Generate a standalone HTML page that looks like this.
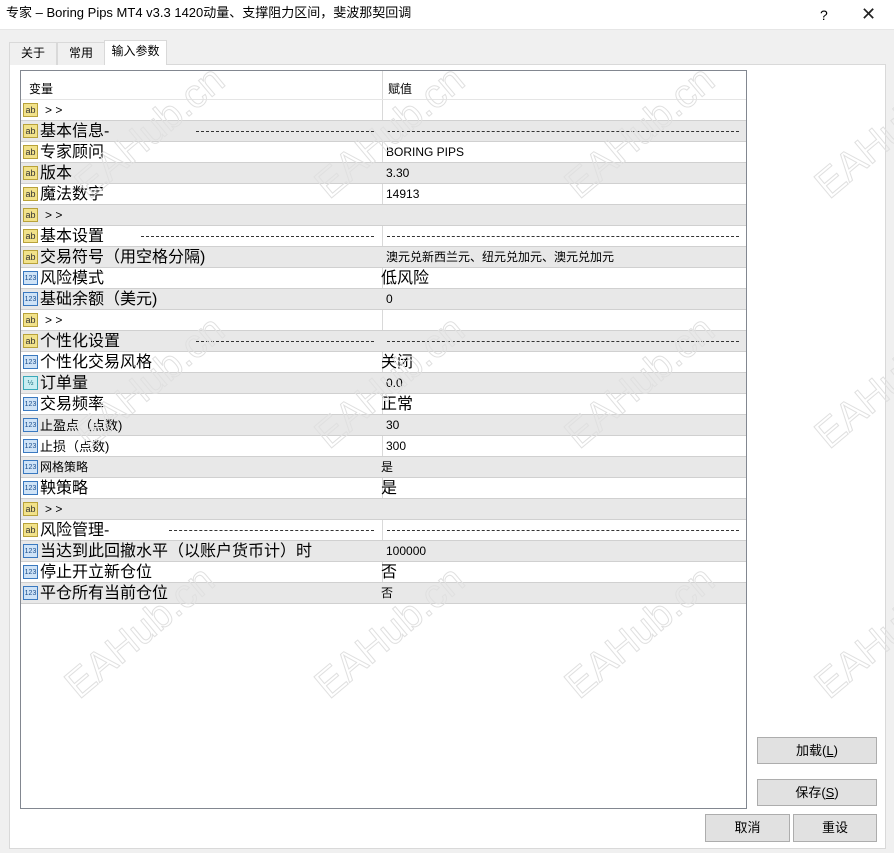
<!DOCTYPE html>
<html><head><meta charset="utf-8"><style>
*{box-sizing:border-box;margin:0;padding:0}
body{width:894px;height:853px;overflow:hidden;background:#f0f0f0;font-family:"Liberation Sans","Microsoft YaHei","Noto Sans CJK SC",sans-serif;color:#000;position:relative}
.title{position:absolute;left:0;top:0;width:894px;height:30px;background:#fff;font-size:13px;line-height:26px;padding-left:6px;border-bottom:1px solid #e6e6e6}
.title .q{position:absolute;left:820px;top:2px;font-size:14px}
.title .x{position:absolute;left:861px;top:1px;font-size:18px;font-weight:100;color:#222}
.tab{position:absolute;top:42px;height:23px;font-size:12px;line-height:20px;text-align:center;border:1px solid #d9d9d9;border-bottom:none;background:#f0f0f0}
.tab.act{background:#fff;top:40px;height:25px}
.page{position:absolute;left:9px;top:64px;width:877px;height:785px;background:#fff;border:1px solid #d9d9d9}
.list{position:absolute;left:20px;top:70px;width:727px;height:739px;border:1px solid #828790;background:#fff;overflow:hidden}
.hdr{height:29px;font-size:12px;position:relative;border-bottom:1px solid #e5e5e5}
.hdr span{position:absolute;top:9px}
.vl{position:absolute;left:361px;top:0;width:1px;height:533px;background:#d9d9d9}
.row{height:21px;position:relative;border-bottom:1px solid #d0d0d0;white-space:nowrap}
.row.g{background:#e8e8e8}
.ic{position:absolute;left:2px;top:3px;width:15px;height:14px;font-size:9px;line-height:13px;text-align:center;border:1px solid}
.ab{background:#f2e28a;border-color:#b8a23a;color:#333}
.n{background:#cfe3f7;border-color:#3a79c0;color:#1a4d8c;font-size:7px}
.h{background:#c8eef2;border-color:#3aa9b9;color:#1a6d7c;font-size:7px}
.lb{position:absolute;left:19px;top:0;font-size:16px;line-height:21px}
.lb.s{font-size:12px;left:24px}
.lb.m{font-size:13px}
.v{position:absolute;left:365px;top:0;font-size:12px;line-height:21px}
.v.b{font-size:16px;left:360px}
.dash{position:absolute;top:10px;border-top:1px dashed #333;height:0}
.btn{position:absolute;background:#e1e1e1;border:1px solid #adadad;font-size:13px;text-align:center;line-height:25px}
.wm{position:absolute;font-size:40px;color:transparent;-webkit-text-stroke:1px #e0e0e0;transform:rotate(-40deg);white-space:nowrap;font-family:"Liberation Sans",sans-serif}
</style></head><body>
<div class="title">专家 – Boring Pips MT4 v3.3 1420动量、支撑阻力区间，斐波那契回调<span class="q">?</span><span class="x">✕</span></div>
<div class="page"></div>
<div class="tab" style="left:9px;width:48px">关于</div>
<div class="tab" style="left:57px;width:48px">常用</div>
<div class="tab act" style="left:104px;width:63px">输入参数</div>
<div class="list">
<div class="vl"></div>
<div class="hdr"><span style="left:8px">变量</span><span style="left:367px">赋值</span></div>
<div class="row"><div class="ic ab">ab</div><div class="lb s">&gt; &gt;</div></div>
<div class="row g"><div class="ic ab">ab</div><div class="lb">基本信息-</div><div class="dash" style="left:175px;width:178px"></div><div class="dash" style="left:366px;width:352px"></div></div>
<div class="row"><div class="ic ab">ab</div><div class="lb">专家顾问</div><div class="v">BORING PIPS</div></div>
<div class="row g"><div class="ic ab">ab</div><div class="lb">版本</div><div class="v">3.30</div></div>
<div class="row"><div class="ic ab">ab</div><div class="lb">魔法数字</div><div class="v">14913</div></div>
<div class="row g"><div class="ic ab">ab</div><div class="lb s">&gt; &gt;</div></div>
<div class="row"><div class="ic ab">ab</div><div class="lb">基本设置</div><div class="dash" style="left:120px;width:233px"></div><div class="dash" style="left:366px;width:352px"></div></div>
<div class="row g"><div class="ic ab">ab</div><div class="lb">交易符号（用空格分隔)</div><div class="v">澳元兑新西兰元、纽元兑加元、澳元兑加元</div></div>
<div class="row"><div class="ic n">123</div><div class="lb">风险模式</div><div class="v b">低风险</div></div>
<div class="row g"><div class="ic n">123</div><div class="lb">基础余额（美元)</div><div class="v">0</div></div>
<div class="row"><div class="ic ab">ab</div><div class="lb s">&gt; &gt;</div></div>
<div class="row g"><div class="ic ab">ab</div><div class="lb">个性化设置</div><div class="dash" style="left:175px;width:178px"></div><div class="dash" style="left:366px;width:352px"></div></div>
<div class="row"><div class="ic n">123</div><div class="lb">个性化交易风格</div><div class="v b">关闭</div></div>
<div class="row g"><div class="ic h">½</div><div class="lb">订单量</div><div class="v">0.0</div></div>
<div class="row"><div class="ic n">123</div><div class="lb">交易频率</div><div class="v b">正常</div></div>
<div class="row g"><div class="ic n">123</div><div class="lb m">止盈点（点数)</div><div class="v">30</div></div>
<div class="row"><div class="ic n">123</div><div class="lb m">止损（点数)</div><div class="v">300</div></div>
<div class="row g"><div class="ic n">123</div><div class="lb s" style="left:19px">网格策略</div><div class="v" style="left:360px">是</div></div>
<div class="row"><div class="ic n">123</div><div class="lb">鞅策略</div><div class="v b">是</div></div>
<div class="row g"><div class="ic ab">ab</div><div class="lb s">&gt; &gt;</div></div>
<div class="row"><div class="ic ab">ab</div><div class="lb">风险管理-</div><div class="dash" style="left:148px;width:205px"></div><div class="dash" style="left:366px;width:352px"></div></div>
<div class="row g"><div class="ic n">123</div><div class="lb">当达到此回撤水平（以账户货币计）时</div><div class="v">100000</div></div>
<div class="row"><div class="ic n">123</div><div class="lb">停止开立新仓位</div><div class="v b">否</div></div>
<div class="row g"><div class="ic n">123</div><div class="lb">平仓所有当前仓位</div><div class="v" style="left:360px">否</div></div>
</div>
<div class="btn" style="left:757px;top:737px;width:120px;height:27px">加载(<u>L</u>)</div>
<div class="btn" style="left:757px;top:779px;width:120px;height:27px">保存(<u>S</u>)</div>
<div class="btn" style="left:705px;top:814px;width:85px;height:28px">取消</div>
<div class="btn" style="left:793px;top:814px;width:84px;height:28px">重设</div>
<div class="wm" style="left:60px;top:110px">EAHub.cn</div>
<div class="wm" style="left:300px;top:110px">EAHub.cn</div>
<div class="wm" style="left:550px;top:110px">EAHub.cn</div>
<div class="wm" style="left:800px;top:110px">EAHub.cn</div>
<div class="wm" style="left:60px;top:360px">EAHub.cn</div>
<div class="wm" style="left:300px;top:360px">EAHub.cn</div>
<div class="wm" style="left:550px;top:360px">EAHub.cn</div>
<div class="wm" style="left:800px;top:360px">EAHub.cn</div>
<div class="wm" style="left:50px;top:610px">EAHub.cn</div>
<div class="wm" style="left:300px;top:610px">EAHub.cn</div>
<div class="wm" style="left:550px;top:610px">EAHub.cn</div>
<div class="wm" style="left:800px;top:610px">EAHub.cn</div>
</body></html>
